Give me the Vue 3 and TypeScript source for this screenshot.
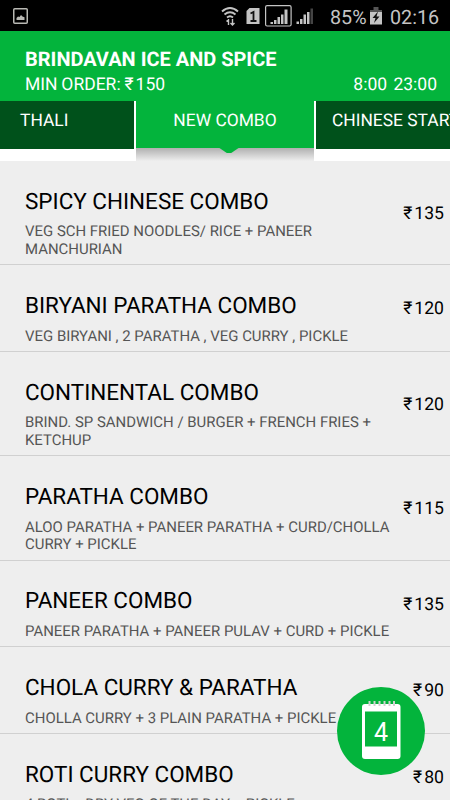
<script setup lang="ts">
interface Dish {
  name: string
  lines: string[]
  price: number
}

const tabs: string[] = ['THALI', 'NEW COMBO', 'CHINESE STARTERS']
const activeTab = 1

const dishes: Dish[] = [
  { name: 'SPICY CHINESE COMBO', lines: ['VEG SCH FRIED NOODLES/ RICE + PANEER', 'MANCHURIAN'], price: 135 },
  { name: 'BIRYANI PARATHA COMBO', lines: ['VEG BIRYANI , 2 PARATHA , VEG CURRY , PICKLE'], price: 120 },
  { name: 'CONTINENTAL COMBO', lines: ['BRIND. SP SANDWICH / BURGER + FRENCH FRIES +', 'KETCHUP'], price: 120 },
  { name: 'PARATHA COMBO', lines: ['ALOO PARATHA + PANEER PARATHA + CURD/CHOLLA', 'CURRY + PICKLE'], price: 115 },
  { name: 'PANEER COMBO', lines: ['PANEER PARATHA + PANEER PULAV + CURD + PICKLE'], price: 135 },
  { name: 'CHOLA CURRY & PARATHA', lines: ['CHOLLA CURRY + 3 PLAIN PARATHA + PICKLE'], price: 90 },
  { name: 'ROTI CURRY COMBO', lines: ['4 ROTI + DRY VEG OF THE DAY + PICKLE'], price: 80 },
]
const cartCount = 4
</script>

<template>
  <div class="screen">
    <div class="status">
      <svg class="picture-icon" width="15" height="16" viewBox="0 0 15 16">
        <rect x=".75" y=".75" width="13.5" height="14.5" rx="1" fill="none" stroke="#b9b9b4" stroke-width="1.5" />
        <path d="M3.500 12V10l1.500-1.500 1.500.5 1.500-2 1.500 1.500 2 .7V12z" fill="#b9b9b4" />
      </svg>
      <svg class="signals" width="94" height="22" viewBox="0 0 94 22">
        <g fill="none" stroke="#c4c4c4" stroke-width="1.9">
          <path d="M1 6.500Q9 -.5 17 6.500M3.500 9.500Q9 5 14.500 9.500M6 12.500Q9 10 12 12.500" />
          <path d="M7.500 20v-6M5.500 16.500l2-2M11.500 14v6M9.500 18l2 2 2-2" stroke-width="1.400" />
        </g>
        <path d="M25.500 6l3-3h10v16h-13z" fill="#c4c4c4" />
        <path d="M29.500 8.500l3-1.500v9M29.500 16h6" fill="none" stroke="#111" stroke-width="1.800" />
        <rect x="44.600" y=".7" width="25.500" height="20.300" rx="1.500" fill="none" stroke="#c4c4c4" stroke-width="1.200" />
        <path d="M49.500 19v-2h2.500v2zM53 19v-4h2.500v4zM56.500 19v-7H59v7zM60 19V9.500h2.500V19zM63.500 19V4.500H66.500V19z" fill="#c4c4c4" />
        <path d="M75.500 19v-2.500H78V19zM79 19v-5h2.500v5zM82.500 19V9.500H85V19zM86 19V7h2.500v12z" fill="#c4c4c4" />
        <path d="M89.500 19V3.500h2.500V19z" fill="#444" />
      </svg>
      <span class="percent">85%</span>
      <svg class="battery" width="12" height="18" viewBox="0 0 12 18">
        <path d="M3.500 0h5v3H12v3H0V3h3.500z" fill="#555" />
        <path d="M0 5h12v12.500H0z" fill="#c4c4c4" />
        <path d="M8 4.500L2.500 11H5.500L4 16 9.500 9.500h-3z" fill="#111" />
      </svg>
      <span class="clock">02:16</span>
    </div>

    <header class="header">
      <h1>BRINDAVAN ICE AND SPICE</h1>
      <div class="meta">
        <span class="minimum">MIN ORDER: <span class="rupee">₹</span>150</span>
        <span class="hours">8:00 23:00</span>
      </div>
    </header>

    <nav class="tabs">
      <div v-for="(tab, i) in tabs" :key="tab" class="tab" :class="{ active: i === activeTab }">
        <span>{{ tab }}</span>
      </div>
    </nav>

    <main class="list">
      <article v-for="dish in dishes" :key="dish.name" class="dish">
        <div class="info">
          <h2>{{ dish.name }}</h2>
          <p v-for="line in dish.lines" :key="line">{{ line }}</p>
        </div>
        <div class="price"><span class="rupee">₹</span>{{ dish.price }}</div>
      </article>
    </main>

    <button class="cart" aria-label="Cart">
      <svg width="40" height="60" viewBox="0 0 40 60">
        <rect x="1" y="4" width="38.500" height="55" rx="3" fill="#fff" />
        <path d="M4 11.500h32v35H4z" fill="#03b43c" />
        <path d="M8.500 1v5M13.500 1v5M18.500 1v5M23.500 1v5M28.500 1v5M33 1v5" stroke="#d1d1d1" stroke-width="2" />
      </svg>
      <span class="count">{{ cartCount }}</span>
    </button>
  </div>
</template>

<style>
body {
  background: #eee;
}
</style>

<style scoped>
.screen {
  position: relative;
  width: 450px;
  height: 800px;
  overflow: hidden;
  display: flex;
  flex-direction: column;
  background: #eee;
  font-family: Roboto, "Noto Sans", sans-serif;
  text-rendering: geometricPrecision;
  color: #000;
}
.status {
  flex: none;
  height: 31px;
  display: flex;
  align-items: center;
  box-sizing: border-box;
  padding: 1px 11px 0 13px;
  background: #000;
  color: #c4c4c4;
  font-size: 19.700px;
  white-space: nowrap;
}
.signals {
  margin-left: auto;
}
.percent {
  width: 37px;
  margin: 2px 3px 0 15px;
}
.clock {
  width: 49px;
  margin: 2px 0 0 8px;
}
.header {
  flex: none;
  height: 70px;
  box-sizing: border-box;
  padding: 16px 13px 0 25px;
  background: #03b43c;
  color: #fff;
}
h1 {
  margin: 0;
  font-size: 19.980px;
  line-height: 24px;
  font-weight: 700;
  white-space: nowrap;
}
.meta {
  display: flex;
  justify-content: space-between;
  font-size: 17.500px;
  line-height: 29px;
  white-space: nowrap;
}
.minimum {
  word-spacing: -.5px;
}
.rupee {
  margin-right: 2px;
}
.hours {
  word-spacing: 2px;
}
.tabs {
  flex: none;
  height: 60px;
  display: grid;
  grid-template-columns: 134px 178px 134px;
  gap: 2px;
  background: #fff;
}
.tab {
  height: 48px;
  box-sizing: border-box;
  padding: 8px 0 0 16px;
  background: #00511b;
  color: #fff;
  font-size: 17.400px;
  line-height: 24px;
  white-space: nowrap;
  overflow: hidden;
}
.tab:first-child {
  padding-left: 20px;
}
.tab.active {
  position: relative;
  height: 60px;
  padding-left: 0;
  text-align: center;
  background: linear-gradient(#03b43c 0 47px, #b0b0b0 47px, #eee 60px);
}
.tab.active::after {
  content: "";
  position: absolute;
  top: 46px;
  left: 82px;
  width: 22px;
  height: 6px;
  background: #03b43c;
  clip-path: polygon(0 0, 100% 0, 60% 100%, 40% 100%);
}
.list {
  flex: 1;
  min-height: 0;
  overflow: hidden;
}
.dish {
  display: flex;
  justify-content: space-between;
  align-items: center;
  box-sizing: border-box;
  padding: 0 6px 0 25px;
  border-bottom: 1px solid #d0d0d0;
}
.info {
  padding: 27.600px 0 6px;
}
h2 {
  margin: 0 0 8.700px;
  font-size: 22.480px;
  line-height: 26px;
  font-weight: 400;
  white-space: nowrap;
}
p {
  margin: 0;
  font-size: 14.940px;
  line-height: 17.500px;
  color: #555;
  white-space: nowrap;
}
.price {
  padding-top: 2px;
  font-size: 17.600px;
  line-height: 22px;
  white-space: nowrap;
}
.cart {
  position: absolute;
  left: 337px;
  top: 687px;
  width: 88px;
  height: 88px;
  padding: 0;
  border: 0;
  border-radius: 50%;
  background: #03b43c;
  color: #fff;
  font-family: inherit;
}
.cart svg {
  position: absolute;
  left: 24px;
  top: 13px;
}
.count {
  position: absolute;
  left: 28px;
  top: 31px;
  width: 32px;
  font-size: 25px;
  line-height: 30px;
  text-align: center;
}
</style>
